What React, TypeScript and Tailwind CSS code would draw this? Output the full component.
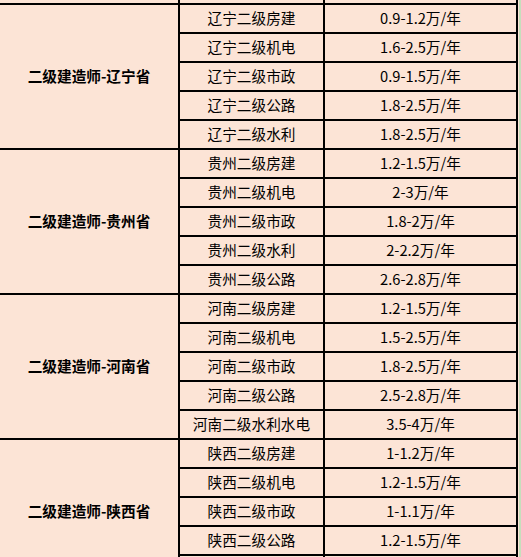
import React from 'react';

type Row = [string, string];

const groups: { name: string; rows: Row[] }[] = [
  {
    name: '二级建造师-辽宁省',
    rows: [
      ['辽宁二级房建', '0.9-1.2万/年'],
      ['辽宁二级机电', '1.6-2.5万/年'],
      ['辽宁二级市政', '0.9-1.5万/年'],
      ['辽宁二级公路', '1.8-2.5万/年'],
      ['辽宁二级水利', '1.8-2.5万/年'],
    ],
  },
  {
    name: '二级建造师-贵州省',
    rows: [
      ['贵州二级房建', '1.2-1.5万/年'],
      ['贵州二级机电', '2-3万/年'],
      ['贵州二级市政', '1.8-2万/年'],
      ['贵州二级水利', '2-2.2万/年'],
      ['贵州二级公路', '2.6-2.8万/年'],
    ],
  },
  {
    name: '二级建造师-河南省',
    rows: [
      ['河南二级房建', '1.2-1.5万/年'],
      ['河南二级机电', '1.5-2.5万/年'],
      ['河南二级市政', '1.8-2.5万/年'],
      ['河南二级公路', '2.5-2.8万/年'],
      ['河南二级水利水电', '3.5-4万/年'],
    ],
  },
  {
    name: '二级建造师-陕西省',
    rows: [
      ['陕西二级房建', '1-1.2万/年'],
      ['陕西二级机电', '1.2-1.5万/年'],
      ['陕西二级市政', '1-1.1万/年'],
      ['陕西二级公路', '1.2-1.5万/年'],
      // last row lies below the visible edge
      ['', ''],
    ],
  },
];

export default function App() {
  return (
    <div
      className="w-[521px] h-[557px] overflow-hidden bg-[#fce4d6] flex text-black text-[14.67px] leading-none"
      style={{ fontFamily: '"Noto Sans CJK SC", "Noto Sans", sans-serif' }}
    >
      <div className="w-[518px] flex flex-col shrink-0">
        {/* tail of the row above */}
        <div className="flex h-[3px] shrink-0">
          <div className="w-[180px] border-r-2 border-black" />
          <div className="w-[145px] border-r-2 border-black" />
          <div className="w-[193px] border-r-2 border-black" />
        </div>

        {groups.map((g) => (
          <div key={g.name} className="flex border-t-2 border-black shrink-0">
            <div className="w-[180px] border-r-2 border-black flex items-center justify-center font-bold">
              {g.name}
            </div>
            <div className="flex flex-col">
              {g.rows.map(([title, pay], i) => (
                <div
                  key={i}
                  className={i === 0 ? 'flex h-[27px]' : 'flex h-[29px] border-t-2 border-black'}
                >
                  <div className="w-[145px] border-r-2 border-black flex items-center justify-center whitespace-nowrap">
                    {title}
                  </div>
                  <div className="w-[193px] border-r-2 border-black flex items-center justify-center whitespace-nowrap">
                    {pay}
                  </div>
                </div>
              ))}
            </div>
          </div>
        ))}
      </div>
      <div className="w-px shrink-0" />
      <div className="w-[2px] shrink-0 bg-[#c6dfbc]" />
    </div>
  );
}
